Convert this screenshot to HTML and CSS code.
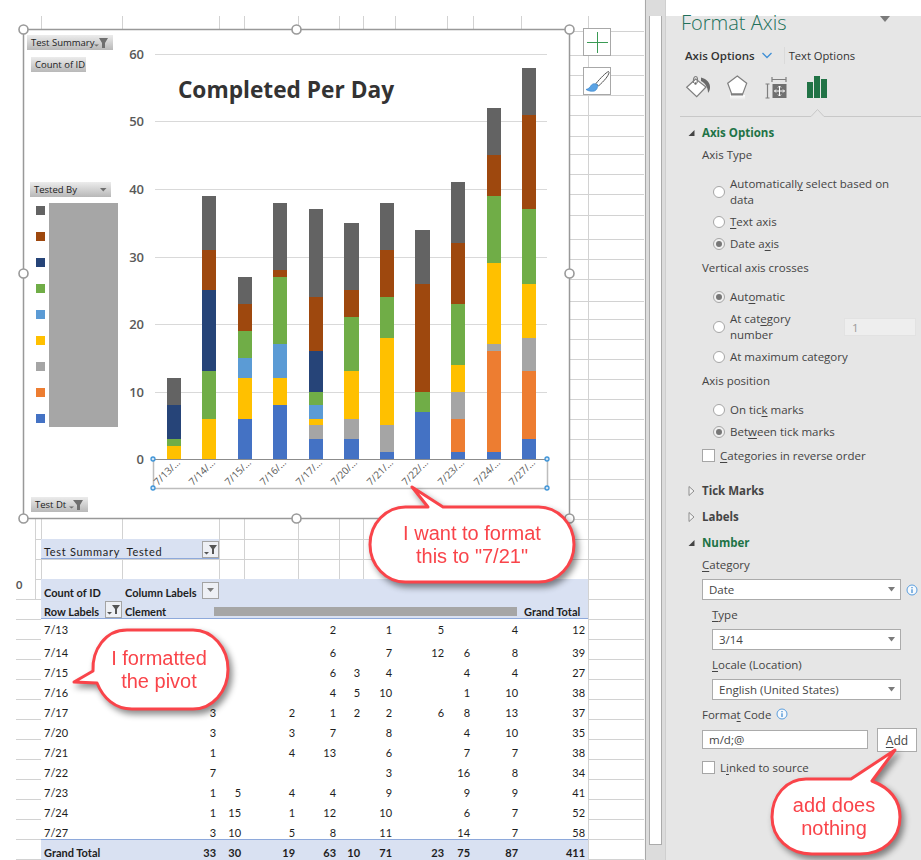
FILE: index.html
```html
<!DOCTYPE html>
<html lang="en">
<head>
<meta charset="utf-8">
<title>Format Axis</title>
<link rel="stylesheet" href="styles.css">
</head>
<body>
<main class="sheet">
  <svg class="grid" width="644" height="860" viewBox="0 0 644 860" aria-hidden="true">
    <path class="gridline" d="M41.5 16V860M122.5 16V580M219.5 16V580M244.5 16V580M298.5 16V580M339.5 16V580M363.5 16V580M395.5 16V580M447.5 16V580M473.5 16V580M521.5 16V580M588.5 16V860M35.5 519V600
    M569 31.5H644M569 55.5H644M569 75.5H644M569 95.5H644M569 115.5H644M569 136.5H644M569 154.5H644M569 174.5H644M569 194.5H644M569 215.5H644M569 239.5H644M569 259.5H644M569 279.5H644M569 301.5H644M569 319.5H644M569 339.5H644M569 359.5H644M569 379.5H644M569 399.5H644M569 419.5H644M569 439.5H644M569 459.5H644M569 479.5H644M569 499.5H644M569 519.5H644
    M35 539.5H644M35 559.5H644M35 579.5H644M16 599.5H644M16 619.5H644M16 639.5H644M16 659.5H644M16 679.5H644M16 699.5H644M16 719.5H644M16 739.5H644M16 759.5H644M16 779.5H644M16 799.5H644M16 819.5H644M16 839.5H644M16 859.5H644"/>
  </svg>

  <span class="row-zero">0</span>

  <table class="pivot">
    <colgroup>
      <col class="c81"><col class="c97"><col class="c25"><col class="c54"><col class="c41"><col class="c24"><col class="c32"><col class="c52"><col class="c26"><col class="c48"><col class="c67">
    </colgroup>
    <tbody>
      <tr>
        <td class="band plain" colspan="2"><div class="split"><span>Test Summary&nbsp; Tested</span>
          <span class="pbtn"><svg width="15" height="15" viewBox="0 0 15 15"><path class="ink" d="M6 3H14L11 7V12H9V7ZM1 10H6L3.500 12.500Z"/></svg></span></div></td>
        <td colspan="9"></td>
      </tr>
      <tr><td colspan="11"></td></tr>
      <tr class="band head">
        <td>Count of ID</td>
        <td><div class="split"><span>Column Labels</span>
          <span class="pbtn"><svg width="15" height="15" viewBox="0 0 15 15"><path class="muted" d="M4 5H11L7.500 9Z"/></svg></span></div></td>
        <td colspan="9"></td>
      </tr>
      <tr class="band head headline">
        <td><div class="split"><span>Row Labels</span>
          <span class="pbtn"><svg width="15" height="15" viewBox="0 0 15 15"><path class="ink" d="M6 3H14L11 7V12H9V7ZM1 10H6L3.500 12.500Z"/></svg></span></div></td>
        <td class="left">Clement</td>
        <td colspan="8"></td>
        <td class="left">Grand Total</td>
      </tr>
      <tr class="data first"><td>7/13</td><td></td><td></td><td></td><td>2</td><td></td><td>1</td><td>5</td><td></td><td>4</td><td>12</td></tr>
      <tr class="data"><td>7/14</td><td></td><td></td><td></td><td>6</td><td></td><td>7</td><td>12</td><td>6</td><td>8</td><td>39</td></tr>
      <tr class="data"><td>7/15</td><td>6</td><td></td><td></td><td>6</td><td>3</td><td>4</td><td></td><td>4</td><td>4</td><td>27</td></tr>
      <tr class="data"><td>7/16</td><td>8</td><td></td><td></td><td>4</td><td>5</td><td>10</td><td></td><td>1</td><td>10</td><td>38</td></tr>
      <tr class="data"><td>7/17</td><td>3</td><td></td><td>2</td><td>1</td><td>2</td><td>2</td><td>6</td><td>8</td><td>13</td><td>37</td></tr>
      <tr class="data"><td>7/20</td><td>3</td><td></td><td>3</td><td>7</td><td></td><td>8</td><td></td><td>4</td><td>10</td><td>35</td></tr>
      <tr class="data"><td>7/21</td><td>1</td><td></td><td>4</td><td>13</td><td></td><td>6</td><td></td><td>7</td><td>7</td><td>38</td></tr>
      <tr class="data"><td>7/22</td><td>7</td><td></td><td></td><td></td><td></td><td>3</td><td></td><td>16</td><td>8</td><td>34</td></tr>
      <tr class="data"><td>7/23</td><td>1</td><td>5</td><td>4</td><td>4</td><td></td><td>9</td><td></td><td>9</td><td>9</td><td>41</td></tr>
      <tr class="data"><td>7/24</td><td>1</td><td>15</td><td>1</td><td>12</td><td></td><td>10</td><td></td><td>6</td><td>7</td><td>52</td></tr>
      <tr class="data"><td>7/27</td><td>3</td><td>10</td><td>5</td><td>8</td><td></td><td>11</td><td></td><td>14</td><td>7</td><td>58</td></tr>
      <tr class="total"><td>Grand Total</td><td>33</td><td>30</td><td>19</td><td>63</td><td>10</td><td>71</td><td>23</td><td>75</td><td>87</td><td>411</td></tr>
    </tbody>
  </table>
  <div class="redact"></div>

  <svg class="chart" width="560" height="504" viewBox="16 22 560 504" role="img" aria-label="Completed Per Day chart">
    <defs>
      <linearGradient id="fieldBg" x1="0" y1="0" x2="0" y2="1"><stop offset="0" stop-color="#ececec"/><stop offset="1" stop-color="#b8b8b8"/></linearGradient>
    </defs>
    <rect class="frame" x="23.500" y="29.500" width="546" height="489"/>
    <path class="plotline" d="M155 54.500H547M155 121.500H547M155 189.500H547M155 257.500H547M155 324.500H547M155 392.500H547"/>

    <text class="ytick" x="144" y="59">60</text>
    <text class="ytick" x="144" y="126">50</text>
    <text class="ytick" x="144" y="194">40</text>
    <text class="ytick" x="144" y="262">30</text>
    <text class="ytick" x="144" y="329">20</text>
    <text class="ytick" x="144" y="397">10</text>
    <text class="ytick" x="144" y="464">0</text>

    <text class="chart-title" x="286" y="98">Completed Per Day</text>

    <g transform="translate(0 459) scale(1 -6.75)" shape-rendering="crispEdges">
      <g transform="translate(167 0)"><rect class="s4" width="14" y="0" height="2"/><rect class="s6" width="14" y="2" height="1"/><rect class="s7" width="14" y="3" height="5"/><rect class="s9" width="14" y="8" height="4"/></g>
      <g transform="translate(202 0)"><rect class="s4" width="14" y="0" height="6"/><rect class="s6" width="14" y="6" height="7"/><rect class="s7" width="14" y="13" height="12"/><rect class="s8" width="14" y="25" height="6"/><rect class="s9" width="14" y="31" height="8"/></g>
      <g transform="translate(238 0)"><rect class="s1" width="14" y="0" height="6"/><rect class="s4" width="14" y="6" height="6"/><rect class="s5" width="14" y="12" height="3"/><rect class="s6" width="14" y="15" height="4"/><rect class="s8" width="14" y="19" height="4"/><rect class="s9" width="14" y="23" height="4"/></g>
      <g transform="translate(273 0)"><rect class="s1" width="14" y="0" height="8"/><rect class="s4" width="14" y="8" height="4"/><rect class="s5" width="14" y="12" height="5"/><rect class="s6" width="14" y="17" height="10"/><rect class="s8" width="14" y="27" height="1"/><rect class="s9" width="14" y="28" height="10"/></g>
      <g transform="translate(309 0)"><rect class="s1" width="14" y="0" height="3"/><rect class="s3" width="14" y="3" height="2"/><rect class="s4" width="14" y="5" height="1"/><rect class="s5" width="14" y="6" height="2"/><rect class="s6" width="14" y="8" height="2"/><rect class="s7" width="14" y="10" height="6"/><rect class="s8" width="14" y="16" height="8"/><rect class="s9" width="14" y="24" height="13"/></g>
      <g transform="translate(344 0)"><rect class="s1" width="15" y="0" height="3"/><rect class="s3" width="15" y="3" height="3"/><rect class="s4" width="15" y="6" height="7"/><rect class="s6" width="15" y="13" height="8"/><rect class="s8" width="15" y="21" height="4"/><rect class="s9" width="15" y="25" height="10"/></g>
      <g transform="translate(380 0)"><rect class="s1" width="14" y="0" height="1"/><rect class="s3" width="14" y="1" height="4"/><rect class="s4" width="14" y="5" height="13"/><rect class="s6" width="14" y="18" height="6"/><rect class="s8" width="14" y="24" height="7"/><rect class="s9" width="14" y="31" height="7"/></g>
      <g transform="translate(415 0)"><rect class="s1" width="15" y="0" height="7"/><rect class="s6" width="15" y="7" height="3"/><rect class="s8" width="15" y="10" height="16"/><rect class="s9" width="15" y="26" height="8"/></g>
      <g transform="translate(451 0)"><rect class="s1" width="14" y="0" height="1"/><rect class="s2" width="14" y="1" height="5"/><rect class="s3" width="14" y="6" height="4"/><rect class="s4" width="14" y="10" height="4"/><rect class="s6" width="14" y="14" height="9"/><rect class="s8" width="14" y="23" height="9"/><rect class="s9" width="14" y="32" height="9"/></g>
      <g transform="translate(487 0)"><rect class="s1" width="14" y="0" height="1"/><rect class="s2" width="14" y="1" height="15"/><rect class="s3" width="14" y="16" height="1"/><rect class="s4" width="14" y="17" height="12"/><rect class="s6" width="14" y="29" height="10"/><rect class="s8" width="14" y="39" height="6"/><rect class="s9" width="14" y="45" height="7"/></g>
      <g transform="translate(522 0)"><rect class="s1" width="14" y="0" height="3"/><rect class="s2" width="14" y="3" height="10"/><rect class="s3" width="14" y="13" height="5"/><rect class="s4" width="14" y="18" height="8"/><rect class="s6" width="14" y="26" height="11"/><rect class="s8" width="14" y="37" height="14"/><rect class="s9" width="14" y="51" height="7"/></g>
    </g>

    <path class="axisbox" d="M153.500 459V488.500H547.500V459"/>
    <path class="axisline" d="M153 459.500H547"/>
    <circle class="bluedot" cx="153" cy="459" r="2"/><circle class="bluedot" cx="153" cy="488" r="2"/><circle class="bluedot" cx="547" cy="459" r="2"/><circle class="bluedot" cx="547" cy="488" r="2"/>

    <text class="xtick" transform="translate(158 486) rotate(-45)">7/13/…</text>
    <text class="xtick" transform="translate(193 486) rotate(-45)">7/14/…</text>
    <text class="xtick" transform="translate(229 486) rotate(-45)">7/15/…</text>
    <text class="xtick" transform="translate(264 486) rotate(-45)">7/16/…</text>
    <text class="xtick" transform="translate(300 486) rotate(-45)">7/17/…</text>
    <text class="xtick" transform="translate(335 486) rotate(-45)">7/20/…</text>
    <text class="xtick" transform="translate(371 486) rotate(-45)">7/21/…</text>
    <text class="xtick" transform="translate(406 486) rotate(-45)">7/22/…</text>
    <text class="xtick" transform="translate(442 486) rotate(-45)">7/23/…</text>
    <text class="xtick" transform="translate(478 486) rotate(-45)">7/24/…</text>
    <text class="xtick" transform="translate(513 486) rotate(-45)">7/27/…</text>

    <rect class="field" x="27" y="35" width="86" height="15"/>
    <text class="fieldtext" x="31" y="46">Test Summary</text>
    <path class="fieldicon" d="M99 38H108L105 43V48H102V43ZM94 44.500H99L96.500 46.500Z"/>
    <rect class="field" x="31" y="57" width="55" height="15"/>
    <text class="fieldtext" x="35" y="68">Count of ID</text>
    <rect class="field" x="30" y="182" width="81" height="15"/>
    <text class="fieldtext" x="34" y="193">Tested By</text>
    <path class="fieldicon" d="M100 188H106.500L103.250 191.500Z"/>
    <rect class="field" x="31" y="497" width="57" height="15"/>
    <text class="fieldtext" x="35" y="508">Test Dt</text>
    <path class="fieldicon" d="M73 500H83L80 505V510H77V505ZM69 506.500H74L71.500 508.500Z"/>

    <rect class="s9" x="36" y="206" width="9" height="9"/>
    <rect class="s8" x="36" y="232" width="9" height="9"/>
    <rect class="s7" x="36" y="258" width="9" height="9"/>
    <rect class="s6" x="36" y="284" width="9" height="9"/>
    <rect class="s5" x="36" y="310" width="9" height="9"/>
    <rect class="s4" x="36" y="336" width="9" height="9"/>
    <rect class="s3" x="36" y="362" width="9" height="9"/>
    <rect class="s2" x="36" y="388" width="9" height="9"/>
    <rect class="s1" x="36" y="414" width="9" height="9"/>
    <rect class="mask" x="49" y="203" width="69" height="224"/>

    <circle class="handle" cx="23.500" cy="29.500" r="4.500"/><circle class="handle" cx="296.500" cy="29.500" r="4.500"/><circle class="handle" cx="569.500" cy="29.500" r="4.500"/>
    <circle class="handle" cx="23.500" cy="273.500" r="4.500"/><circle class="handle" cx="569.500" cy="273.500" r="4.500"/>
    <circle class="handle" cx="23.500" cy="518.500" r="4.500"/><circle class="handle" cx="296.500" cy="518.500" r="4.500"/><circle class="handle" cx="569.500" cy="518.500" r="4.500"/>
  </svg>

  <div class="chart-tools">
    <div class="tool"><svg width="24" height="24" viewBox="0 0 24 24"><path class="plus" d="M2 12.500H23M12.500 2V23"/></svg></div>
    <div class="tool"><svg width="25" height="25" viewBox="0 0 25 25"><path class="brush-handle" d="M23.500 2.500C21 3.500 15.500 9 11 14.500L13.500 17C19 12 23.500 7 24 3.500Z"/><path class="brush-tip" d="M12.500 15.800C10 14 7.500 14.500 6 16.500C5 18.500 3.500 19.800 1 20.500C3 22 7 22.800 9.500 22C11.800 21 13 18.500 12.500 15.800Z"/></svg></div>
  </div>
</main>

<div class="vscroll"><div class="thumb"></div></div>

<aside class="pane">
  <div class="pane-title"><span>Format Axis</span><svg class="title-arrow" width="10" height="7" viewBox="0 0 10 7"><path class="muted" d="M0 0H10L5 6Z"/></svg></div>
  <div class="tabs">
    <b>Axis Options</b>
    <svg width="10" height="7" viewBox="0 0 10 7"><path class="chev" d="M.5 1L5 5.500L9.500 1"/></svg>
    <span class="tab-sep"></span>
    <span class="tab-text">Text Options</span>
  </div>
  <div class="icons">
    <svg width="27" height="26" viewBox="0 0 27 26"><path class="ic-fill" d="M2.700 12.300L11.700 4L22 12L12.700 21.700Z"/><path class="ic-line" d="M9.500 8C9 4 10 1.500 11.700 1.500C13.500 1.500 14 4 13 8"/><circle class="ic-dot" cx="11.500" cy="8.500" r="1.200"/><path class="ic-drip" d="M17 2.500C23 4 26.500 8 26 13C25.800 15 25 17 24 18C24.200 14 22 8.500 17 6Z"/></svg>
    <svg width="25" height="26" viewBox="0 0 25 26"><defs><linearGradient id="fade" x1="0" y1="0" x2="0" y2="1"><stop offset="0" stop-color="#fff"/><stop offset="1" stop-color="#e6e6e6"/></linearGradient></defs><rect x="5" y="20" width="15" height="5" fill="url(#fade)"/><path class="ic-fill" d="M12.300 1L21.700 8.300L17.700 19H6.700L2.700 8.300Z"/><path class="ic-line2" d="M6 19.500H18"/></svg>
    <svg width="24" height="26" viewBox="0 0 24 26"><path class="ic-line" d="M7 4.500H21M7 2V7M21 2V7M2.500 9V23M.5 9H4.500M.5 23H4.500"/><rect class="ic-box" x="7.500" y="9" width="14" height="14"/><path class="ic-arrows" d="M14.500 11V21M9.500 16H19.500M13 12.500L14.500 11L16 12.500M13 19.500L14.500 21L16 19.500M11 14.500L9.500 16L11 17.500M18 14.500L19.500 16L18 17.500"/></svg>
    <svg class="ic-bars" width="20" height="22" viewBox="0 0 20 22"><rect x="0" y="6" width="6" height="16"/><rect x="7" y="0" width="6" height="22"/><rect x="14" y="3" width="6" height="19"/></svg>
  </div>
  <svg class="divider" width="255" height="10" viewBox="0 0 255 10"><path class="divider-line" d="M14 8.500H145L151.500 1.500L158 8.500H255"/></svg>

  <div class="row sec open gap4"><svg class="tri" width="7" height="7" viewBox="0 0 7 7"><path d="M6.500 .5V6.500H.5Z"/></svg>Axis Options</div>
  <div class="row">Axis Type</div>
  <div class="row opt tall gap10"><i class="radio"></i><span>Automaticall<u>y</u> select based on<br>data</span></div>
  <div class="row opt gap3"><i class="radio"></i><span><u>T</u>ext axis</span></div>
  <div class="row opt"><i class="radio on"></i><span>Date a<u>x</u>is</span></div>
  <div class="row gap2">Vertical axis crosses</div>
  <div class="row opt gap7"><i class="radio on"></i><span>Aut<u>o</u>matic</span></div>
  <div class="row opt tall gap3"><i class="radio"></i><span class="narrow">At cat<u>e</u>gory<br>number</span><span class="spin">1</span></div>
  <div class="row opt gap3"><i class="radio"></i><span>At maximum cate<u>g</u>ory</span></div>
  <div class="row gap2">Axis position</div>
  <div class="row opt gap7"><i class="radio"></i><span>On tic<u>k</u> marks</span></div>
  <div class="row opt"><i class="radio on"></i><span>Bet<u>w</u>een tick marks</span></div>
  <div class="row gap2"><i class="check"></i><span><u>C</u>ategories in reverse order</span></div>

  <div class="row sec gap13"><svg class="tri" width="7" height="11" viewBox="0 0 7 11"><path class="tri-open" d="M1 1L6 5.500L1 10Z"/></svg>Tick Marks</div>
  <div class="row sec gap4"><svg class="tri" width="7" height="11" viewBox="0 0 7 11"><path class="tri-open" d="M1 1L6 5.500L1 10Z"/></svg>Labels</div>
  <div class="row sec open gap4"><svg class="tri" width="7" height="7" viewBox="0 0 7 7"><path d="M6.500 .5V6.500H.5Z"/></svg>Number</div>
  <div class="row"><span><u>C</u>ategory</span></div>
  <div class="field-row gap3">
    <div class="select">Date<svg width="7" height="5" viewBox="0 0 7 5"><path class="muted" d="M0 0H7L3.500 4.500Z"/></svg></div>
    <svg class="info" width="12" height="12" viewBox="0 0 12 12"><circle class="info-ring" cx="6" cy="6" r="5"/><path class="info-i" d="M6 5.200V9M6 3V4.200"/></svg>
  </div>
  <div class="row inset gap4"><span><u>T</u>ype</span></div>
  <div class="select sub gap3">3/14<svg width="7" height="5" viewBox="0 0 7 5"><path class="muted" d="M0 0H7L3.500 4.500Z"/></svg></div>
  <div class="row inset gap4"><span><u>L</u>ocale (Location)</span></div>
  <div class="select sub gap3">English (United States)<svg width="7" height="5" viewBox="0 0 7 5"><path class="muted" d="M0 0H7L3.500 4.500Z"/></svg></div>
  <div class="row gap4"><span>Forma<u>t</u> Code</span><svg class="info code" width="12" height="12" viewBox="0 0 12 12"><circle class="info-ring" cx="6" cy="6" r="5"/><path class="info-i" d="M6 5.200V9M6 3V4.200"/></svg></div>
  <div class="code-row gap2"><div class="code-input">m/d;@</div><div class="add"><u>A</u>dd</div></div>
  <div class="row gap5"><i class="check"></i><span>L<u>i</u>nked to source</span></div>
</aside>

<svg class="callouts" width="921" height="860" viewBox="0 0 921 860">
  <g class="callout">
    <path d="M406 507H428L412 487L443 507H538A35.500 37.500 0 0 1 574 544.500A35.500 37.500 0 0 1 538 582H406A35.500 37.500 0 0 1 370 544.500A35.500 37.500 0 0 1 406 507Z"/>
    <text x="472" y="540">I want to format</text>
    <text x="472" y="563">this to "7/21"</text>
  </g>
  <g class="callout">
    <path d="M127 630H193A35 39.500 0 0 1 228 669.500A35 39.500 0 0 1 193 709H132C115 709 103 698 97 683L74 682L93 671C92 650 105 630 127 630Z"/>
    <text x="159" y="665">I formatted</text>
    <text x="159" y="688">the pivot</text>
  </g>
  <g class="callout">
    <path d="M806 779H851L895 750L872 781C890 788 900 800 900 817C900 840 882 854 860 854H812C789 854 772 838 772 817C772 796 786 779 806 779Z"/>
    <text x="834" y="812">add does</text>
    <text x="834" y="835">nothing</text>
  </g>
</svg>
</body>
</html>
```
FILE: styles.css
```css
* { box-sizing: border-box; }
html, body { margin: 0; padding: 0; }
body {
  position: relative;
  display: flex;
  width: 921px;
  height: 860px;
  overflow: hidden;
  background: #fff;
  font-family: "Open Sans", "Liberation Sans", sans-serif;
}

/* Worksheet */
.sheet {
  position: relative;
  flex: none;
  width: 644px;
  height: 860px;
  padding: 539px 0 0 41px;
}
.grid { position: absolute; left: 0; top: 0; }
.gridline { fill: none; stroke: #d2d2d2; stroke-width: 1; }
.row-zero {
  position: absolute;
  left: 16px;
  top: 578px;
  font: bold 11px/14px Lato, sans-serif;
  color: #555;
}
.pivot {
  position: relative;
  width: 547px;
  border-collapse: separate;
  border-spacing: 0;
  table-layout: fixed;
  font: 11px/12px Lato, "Liberation Sans", sans-serif;
  color: #1d1d1d;
}
.c81 { width: 81px; } .c97 { width: 97px; } .c25 { width: 25px; } .c54 { width: 54px; }
.c41 { width: 41px; } .c24 { width: 24px; } .c32 { width: 32px; } .c52 { width: 52px; }
.c26 { width: 26px; } .c48 { width: 48px; } .c67 { width: 67px; }
.pivot td { height: 20px; padding: 0 3px; vertical-align: bottom; overflow: visible; white-space: nowrap; }
.band { background: #d9e1f2; }
.plain { border-bottom: 1px solid #8ea9db; letter-spacing: .7px; padding-right: 0 !important; }
.head td { font-weight: 700; }
.headline td { border-bottom: 1px solid #8ea9db; }
.left { text-align: left; }
.split { display: flex; align-items: flex-end; justify-content: space-between; height: 17px; line-height: 12px; letter-spacing: inherit; }
.pivot .head td:first-child { padding-right: 0; }
.pivot .head td:nth-child(2) { padding-right: 0; }
.pbtn {
  display: flex;
  flex: none;
  width: 17px;
  height: 17px;
  align-items: center;
  justify-content: center;
  background: #eef0f5;
  border: 1px solid #a4a4a4;
}
.data td, .total td { text-align: right; }
.data td:first-child, .total td:first-child { text-align: left; }
.data td { background: #fff; }
.first td { padding-bottom: 3px; }
.total td { height: 21px; padding-bottom: 1px; background: #d9e1f2; border-top: 1px solid #8ea9db; font-weight: 700; }
.ink { fill: #555; }
.muted { fill: #7b7b7b; }
.redact {
  position: absolute;
  left: 214px;
  top: 607px;
  width: 303px;
  height: 9px;
  background: #a6a6a6;
}

/* Chart */
.chart { position: absolute; left: 16px; top: 22px; }
.frame { fill: #fff; stroke: #999; stroke-width: 1.5; }
.plotline { fill: none; stroke: #d9d9d9; stroke-width: 1; }
.ytick { font: 600 13px "Open Sans", sans-serif; fill: #595959; text-anchor: end; }
.chart-title { font: 700 22.700px "Open Sans", sans-serif; fill: #333; text-anchor: middle; }
.xtick { font: 10px "Open Sans", sans-serif; fill: #595959; }
.s1 { fill: #4472c4; } .s2 { fill: #ed7d31; } .s3 { fill: #a5a5a5; }
.s4 { fill: #ffc000; } .s5 { fill: #5b9bd5; } .s6 { fill: #70ad47; }
.s7 { fill: #264478; } .s8 { fill: #9e480e; } .s9 { fill: #636363; }
.mask { fill: #a6a6a6; }
.axisbox { fill: none; stroke: #bdbdbd; stroke-width: 1.500; }
.axisline { fill: none; stroke: #8c8c8c; stroke-width: 1; }
.bluedot { fill: #cfe3f5; stroke: #3f95d8; stroke-width: 1.300; }
.field { fill: url(#fieldBg); }
.fieldtext { font: 9.500px "Open Sans", sans-serif; fill: #222; }
.fieldicon { fill: #6f6f6f; }
.handle { fill: #fff; stroke: #999; stroke-width: 1.600; }

.chart-tools {
  position: absolute;
  left: 583px;
  top: 28px;
  display: flex;
  flex-direction: column;
  gap: 11px;
}
.tool {
  display: flex;
  width: 28px;
  height: 28px;
  align-items: center;
  justify-content: center;
  background: #fff;
  border: 1px solid #a8a8a8;
}
.plus { fill: none; stroke: #3a9a54; stroke-width: 1; }
.brush-handle { fill: #fff; stroke: #555; stroke-width: 1; }
.brush-tip { fill: #5ba3e4; stroke: #2f7fca; stroke-width: .6; }

/* Sheet scrollbar */
.vscroll {
  flex: none;
  width: 22px;
  height: 860px;
  padding: 16px 3px 15px 4px;
  background: #dcdcdc;
  border-left: 1px solid #fafafa;
  border-right: 1px solid #cfcfcf;
  box-shadow: inset 1px 0 0 #a9a9a9;
}
.thumb { height: 100%; background: #fff; border: 1px solid #ababab; border-top: 0; }

/* Format pane */
.pane {
  flex: 1;
  height: 844px;
  margin-top: 16px;
  padding-left: 36px;
  background: #e6e6e6;
  font-size: 11.500px;
  color: #444;
}
.pane-title {
  display: flex;
  justify-content: space-between;
  height: 28px;
  margin: -7px 0 0 -21px;
  font-weight: 300;
  font-size: 20px;
  line-height: 28px;
  color: #21705a;
}
.title-arrow { margin: 7px 31px 0 0; }
.tabs {
  display: flex;
  align-items: center;
  height: 22px;
  margin: 7px 0 0 -17px;
  color: #333;
}
.tabs b { font-weight: 600; }
.tabs svg { margin-left: 7px; }
.chev { fill: none; stroke: #3f8fd6; stroke-width: 1.300; }
.tab-sep { width: 1px; height: 17px; margin: 0 4px 0 12px; background: #dadada; }
.tab-text { font-size: 11.200px; }
.icons {
  display: flex;
  align-items: flex-end;
  height: 26px;
  margin: 9px 0 0 -18px;
  gap: 14px;
}
.icons svg { flex: none; }
.icons svg:nth-child(3) { margin-left: 1px; }
.ic-bars { margin: 0 0 3px 4px; fill: #217346; }
.ic-fill { fill: #fff; stroke: #7f7f7f; stroke-width: 1.200; }
.ic-line { fill: none; stroke: #7f7f7f; stroke-width: 1.200; }
.ic-line2 { fill: none; stroke: #7f7f7f; stroke-width: 2; }
.ic-dot, .ic-drip { fill: #6a6a6a; }
.ic-box { fill: #707070; }
.ic-arrows { fill: none; stroke: #fff; stroke-width: 1; }
.divider { display: block; margin: 7px 0 0 -36px; }
.divider-line { fill: #e6e6e6; stroke: #c8c8c8; stroke-width: 1; }

.row { display: flex; align-items: center; height: 22px; padding-bottom: 2px; white-space: nowrap; }
.row u, .add u { text-underline-offset: 2px; }
.opt { padding-left: 11px; padding-bottom: 0; }
.opt > span { line-height: 16px; }
.tall { height: 32px; }
.inset { padding-left: 10px; }
.radio {
  position: relative;
  flex: none;
  width: 12px;
  height: 12px;
  margin-right: 5px;
  background: #fff;
  border: 1px solid #a6a6a6;
  border-radius: 50%;
}
.radio.on { background: #f1f1f1; }
.radio.on::after {
  content: "";
  position: absolute;
  left: 2px;
  top: 2px;
  width: 6px;
  height: 6px;
  background: #777;
  border-radius: 50%;
}
.check {
  flex: none;
  width: 13px;
  height: 13px;
  margin-right: 5px;
  background: #fff;
  border: 1px solid #a6a6a6;
}
.narrow { width: 114px; }
.spin {
  width: 72px;
  height: 18px;
  padding-left: 7px;
  line-height: 18px !important;
  background: #eee;
  border: 1px solid #e2e2e2;
  color: #9a9a9a;
}
.sec { position: relative; font-weight: 700; color: #444; }
.sec.open { color: #217346; }
.tri { position: absolute; left: -14px; top: 50%; transform: translateY(-50%); fill: #444; }
.tri-open { fill: #f2f2f2; stroke: #777; stroke-width: .8; }
.field-row { display: flex; align-items: center; gap: 5px; }
.select {
  display: flex;
  align-items: center;
  justify-content: space-between;
  width: 199px;
  height: 21px;
  padding: 0 5px 0 6px;
  background: #fff;
  border: 1px solid #ababab;
  color: #444;
}
.select.sub { width: 189px; margin-left: 10px; }
.info-ring { fill: #f5f9fd; stroke: #5a9ede; stroke-width: 1; }
.info-i { fill: none; stroke: #3a87d0; stroke-width: 1.200; }
.info.code { margin-left: 5px; }
.code-row { display: flex; align-items: flex-start; }
.code-input {
  width: 166px;
  height: 19px;
  margin-top: 2px;
  padding-left: 6px;
  line-height: 17px;
  background: #fff;
  border: 1px solid #ababab;
}
.add {
  width: 40px;
  height: 24px;
  margin-left: 9px;
  text-align: center;
  line-height: 23px;
  background: #fff;
  border: 1px solid #ababab;
  font-size: 12px;
}
.gap2 { margin-top: 2px; } .gap3 { margin-top: 3px; } .gap4 { margin-top: 4px; }
.gap5 { margin-top: 5px; } .gap7 { margin-top: 7px; } .gap10 { margin-top: 10px; }
.gap13 { margin-top: 13px; }

/* Callouts */
.callouts { position: absolute; left: 0; top: 0; pointer-events: none; }
.callout { filter: drop-shadow(3px 4px 3px rgba(0, 0, 0, .45)); }
.callout path { fill: #fff; stroke: #f9444a; stroke-width: 3; stroke-linejoin: round; }
.callout text { font: 20px "Liberation Sans", Arial, sans-serif; fill: #f9444a; text-anchor: middle; }
```
